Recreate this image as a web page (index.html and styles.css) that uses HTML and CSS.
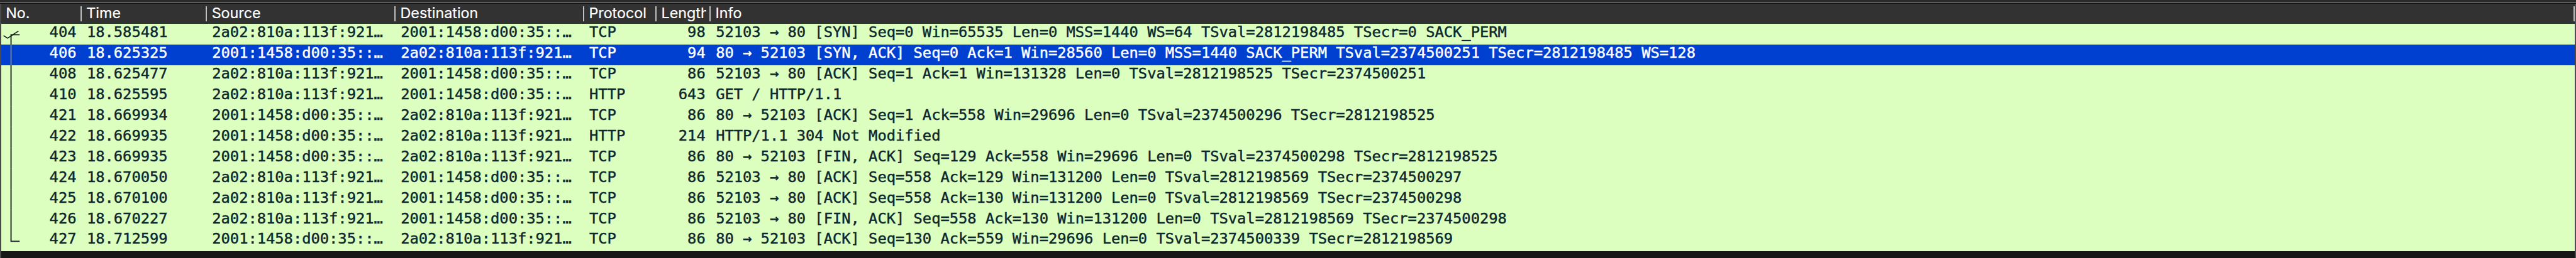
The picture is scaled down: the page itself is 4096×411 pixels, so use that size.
FILE: index.html
```html
<!DOCTYPE html>
<html lang="en">
<head>
<meta charset="utf-8">
<title>Packet list</title>
<link rel="stylesheet" href="styles.css">
</head>
<body>
<main class="window">
  <div class="splitter"></div>
  <div class="pane">
    <div class="header columns">
      <div class="heading"><span>No.</span></div>
      <div class="heading"><span>Time</span></div>
      <div class="heading"><span>Source</span></div>
      <div class="heading"><span>Destination</span></div>
      <div class="heading"><span>Protocol</span></div>
      <div class="heading"><span>Length</span></div>
      <div class="heading"><span>Info</span></div>
    </div>
    <div class="packets" id="packets"></div>
  </div>
  <div class="footer"></div>
</main>
<script src="packets.js"></script>
</body>
</html>
```
FILE: styles.css
```css
/* 1rem is one 448th of the window's width */
html {
  font-size: calc(100vw / 448);
}

body {
  margin: 0;
  height: 100vh;
  overflow: hidden;
  background: #171717;
}

.window {
  box-sizing: border-box;
  height: 100vh;
  display: flex;
  flex-direction: column;
  overflow: hidden;
}

.splitter {
  flex: none;
  box-sizing: border-box;
  height: 0.7rem;
  background: #2a2a2a;
  border-bottom: 1px solid #111;
  box-shadow: inset 0 -2px 0 #5c5c5c;
}

.pane {
  flex: none;
  border-left: 2px solid #4a4a4a;
  border-right: 2px solid #4d4d4d;
}

.columns {
  display: grid;
  grid-template-columns: 14rem 21.8rem 32.8rem 32.8rem 12.6rem 9.4rem 1fr;
}

.header {
  height: 3.5rem;
  background: #323232;
  color: #fff;
  font-family: Inter, "Liberation Sans", sans-serif;
  font-size: 2.55rem;
  line-height: 3.35rem;
  -webkit-text-stroke: 0.2px currentColor;
}

.heading {
  box-sizing: border-box;
  height: 2.6rem;
  margin-top: 0.4rem;
  padding: 0 0.6rem 0 0.8rem;
  border-right: 2px solid #bfbfbf;
  display: flex;
  min-width: 0;
}

.heading span {
  margin-top: -0.4rem;
  height: 3.4rem;
  overflow: hidden;
  white-space: nowrap;
}

.row {
  height: 3.6rem;
  background: #dcffc0;
  color: #0c272e;
  font-family: "DejaVu Sans Mono", monospace;
  font-size: 2.6rem;
  line-height: 3.05rem;
  letter-spacing: -0.0018rem;
  white-space: pre;
  -webkit-text-stroke: 0.45px currentColor;
}

.row.selected {
  background: #0040d0;
  color: #fff;
}

.cell {
  padding: 0 0.93rem 0 0.87rem;
}

.cell.number {
  text-align: right;
}

.cell.first {
  display: flex;
  justify-content: space-between;
  padding-left: 0;
}

.thread {
  display: block;
  width: 3.6rem;
  height: 3.6rem;
  fill: none;
  stroke: #12191c;
  stroke-width: 2;
}

.selected .thread {
  stroke: #858585;
}

.footer {
  flex: 1;
  background: #171717;
  border-left: 2px solid #4a4a4a;
  border-right: 2px solid #4d4d4d;
}
```
FILE: packets.js
```js
const client = "2a02:810a:113f:921…";
const server = "2001:1458:d00:35::…";

// number, time, sent by the client, protocol, length, info
const packets = [
  [404, "18.585481", true, "TCP", 98, "52103 → 80 [SYN] Seq=0 Win=65535 Len=0 MSS=1440 WS=64 TSval=2812198485 TSecr=0 SACK_PERM"],
  [406, "18.625325", false, "TCP", 94, "80 → 52103 [SYN, ACK] Seq=0 Ack=1 Win=28560 Len=0 MSS=1440 SACK_PERM TSval=2374500251 TSecr=2812198485 WS=128"],
  [408, "18.625477", true, "TCP", 86, "52103 → 80 [ACK] Seq=1 Ack=1 Win=131328 Len=0 TSval=2812198525 TSecr=2374500251"],
  [410, "18.625595", true, "HTTP", 643, "GET / HTTP/1.1 "],
  [421, "18.669934", false, "TCP", 86, "80 → 52103 [ACK] Seq=1 Ack=558 Win=29696 Len=0 TSval=2374500296 TSecr=2812198525"],
  [422, "18.669935", false, "HTTP", 214, "HTTP/1.1 304 Not Modified "],
  [423, "18.669935", false, "TCP", 86, "80 → 52103 [FIN, ACK] Seq=129 Ack=558 Win=29696 Len=0 TSval=2374500298 TSecr=2812198525"],
  [424, "18.670050", true, "TCP", 86, "52103 → 80 [ACK] Seq=558 Ack=129 Win=131200 Len=0 TSval=2812198569 TSecr=2374500297"],
  [425, "18.670100", true, "TCP", 86, "52103 → 80 [ACK] Seq=558 Ack=130 Win=131200 Len=0 TSval=2812198569 TSecr=2374500298"],
  [426, "18.670227", true, "TCP", 86, "52103 → 80 [FIN, ACK] Seq=558 Ack=130 Win=131200 Len=0 TSval=2812198569 TSecr=2374500298"],
  [427, "18.712599", false, "TCP", 86, "80 → 52103 [ACK] Seq=130 Ack=559 Win=29696 Len=0 TSval=2374500339 TSecr=2812198569"],
];

const selected = 406;

// Line that joins the packets of one conversation
function thread(index) {
  if (index === 0) return '<path d="M32 19H17V36"/><path stroke-width="1.7" d="M4 20.5L11 25L30 12.5"/>';
  if (index === packets.length - 1) return '<path d="M17 0V19H32"/>';
  return '<path d="M17 0V36"/>';
}

document.getElementById("packets").innerHTML = packets.map((packet, index) => {
  const [no, time, outgoing, protocol, length, info] = packet;
  return `<div class="row columns${no === selected ? " selected" : ""}">` +
    `<div class="cell first"><svg class="thread" viewBox="0 0 36 36">${thread(index)}</svg><span>${no}</span></div>` +
    `<div class="cell">${time}</div>` +
    `<div class="cell">${outgoing ? client : server}</div>` +
    `<div class="cell">${outgoing ? server : client}</div>` +
    `<div class="cell">${protocol}</div>` +
    `<div class="cell number">${length}</div>` +
    `<div class="cell">${info}</div></div>`;
}).join("");
```
